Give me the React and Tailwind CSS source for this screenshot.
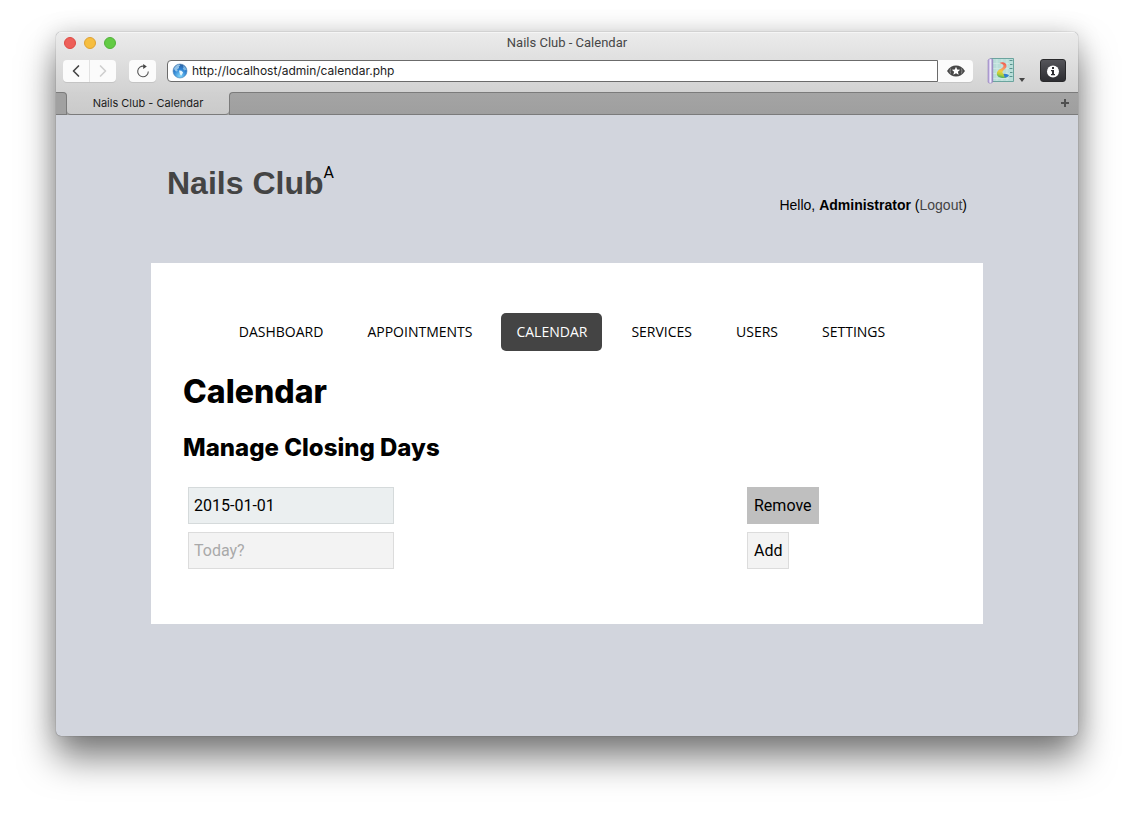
import { ChevronLeft, ChevronRight } from "lucide-react";

const navItems = ["Dashboard", "Appointments", "Calendar", "Services", "Users", "Settings"];

function ReloadIcon() {
  return (
    <svg viewBox="0 0 14 14" className="size-[14px]" fill="none" stroke="#555" strokeWidth="1.1" aria-hidden="true">
      <path d="M12.300 7.500a5.300 5.300 0 1 1-4.300-5.300" />
      <path d="M7.200 0l3.600 2.400-3.600 2.600z" fill="#454545" stroke="none" />
    </svg>
  );
}

function GlobeIcon() {
  return (
    <svg viewBox="0 0 16 16" className="size-4 shrink-0" aria-hidden="true">
      <defs>
        <radialGradient id="ocean" cx="0.5" cy="0.85" r="0.85">
          <stop offset="0" stopColor="#7fd6fa" />
          <stop offset="0.6" stopColor="#2c7fd0" />
          <stop offset="1" stopColor="#2b5f9e" />
        </radialGradient>
      </defs>
      <circle cx="8" cy="8" r="7" fill="url(#ocean)" stroke="#4d86b8" strokeWidth="0.6" />
      <path d="M2 5.500C3 3 5 1.600 7.300 1.400l1 1.200-1.500 1 .3 1.500-1.900 1.200.5 1.700-1.600.5L2.500 7z" fill="#a5d0ee" opacity="0.85" />
      <path d="M7 7.500l2.400.3 1.700 1.600-.8 1.500-1.200 1.900-1.200-1.700z" fill="#e9f7fd" />
      <path d="M11 2.200c1.800 1 3 2.800 3.300 4.600l-1.700.6-1.900-1.600.9-1.500z" fill="#8fc5ea" opacity="0.8" />
    </svg>
  );
}

function EyeStarIcon() {
  return (
    <svg viewBox="0 0 18 12" className="h-3 w-[18px]" aria-hidden="true">
      <path d="M0 6C2.500 2 5.500.5 9 .5S15.500 2 18 6c-2.500 4-5.500 5.500-9 5.500S2.500 10 0 6z" fill="#484848" />
      <path d="M9 1.800l1.200 2.800 3 .2-2.300 2 .8 3L9 8.200 6.300 9.800l.8-3-2.300-2 3-.2z" fill="#fff" />
      <path d="M3.600 3.500q-1.200 2.500 0 5M14.400 3.500q1.200 2.500 0 5" stroke="#aaa" strokeWidth="0.7" fill="none" />
    </svg>
  );
}

function ScrollIcon() {
  return (
    <svg viewBox="0 0 28 28" className="size-7" aria-hidden="true">
      <defs>
        <linearGradient id="flame" x1="0.6" y1="0" x2="0.4" y2="1">
          <stop offset="0" stopColor="#ef5a4c" />
          <stop offset="0.35" stopColor="#f7906a" />
          <stop offset="0.6" stopColor="#f1cf3c" />
          <stop offset="0.8" stopColor="#b4cf3c" />
          <stop offset="1" stopColor="#3faa62" />
        </linearGradient>
        <linearGradient id="roll">
          <stop offset="0" stopColor="#a48fce" />
          <stop offset="0.5" stopColor="#f4efff" />
          <stop offset="1" stopColor="#8f7cba" />
        </linearGradient>
      </defs>
      <path d="M3.500 1.500h23v23h-21z" fill="#b9ded9" stroke="#6ba49e" />
      <path d="M10 2v22M15 2v22M20 2v22M6 6.500h16M6 11.500h16M6 16.500h16M6 21.500h16" stroke="#d0eae6" strokeWidth="0.8" />
      <path d="M22.500 3.500h3M23 7.500h2.500M22.500 11.500h3M23 15.500h2.500M22.500 19.500h3" stroke="#4e8984" strokeWidth="0.9" />
      <path d="M12.500 6c3-1.700 7.200-.5 7 3.200-.2 2.800-3.800 3.800-4 6-.1 2 3.300 1.500 5.600 3.300-1.200 2.200-4.500 3-7 2.300-4.200-.9-5.300-4-3.300-6.800 1.700-2.200 5.800-3 5.700-5.300-.1-1.500-2.300-1.900-4-2.700z" fill="url(#flame)" />
      <path d="M16.500 17c1.500-.8 4.300 0 5.500 1.500-.8 1.200-2.500 2-4.200 2.200z" fill="#2f7fd0" />
      <path d="M1 3.500C1 1.500 5.800.8 5.800 3v21.500c0 2-4.800 2.400-4.800.3z" fill="url(#roll)" stroke="#9583bd" strokeWidth="0.6" />
    </svg>
  );
}

function InfoIcon() {
  return (
    <svg viewBox="0 0 14 14" className="size-[14px]" aria-hidden="true">
      <circle cx="7" cy="7.500" r="6" fill="#fff" />
      <path d="M6 3h2v2H6zM5 6h3v4h1v1.300H5V10h1V7.300H5z" fill="#2e2e32" />
    </svg>
  );
}

function Browser({ children }) {
  return (
    <div className="flex flex-1 flex-col overflow-hidden rounded-[5px] bg-[#d2d5dd] shadow-[0_0_1px_rgba(0,0,0,0.6),0_22px_36px_rgba(0,0,0,0.5),0_0_24px_rgba(0,0,0,0.15)]">
      <header className="flex h-[60px] shrink-0 flex-col border-t border-[#f5f5f5] bg-linear-to-b from-[#ebebeb] to-[#d2d2d2] font-[Inter,sans-serif]">
        <div className="relative flex h-5 items-center justify-center">
          <div className="absolute left-2 flex gap-2">
            <button aria-label="Close" className="size-3 rounded-full border border-[#de4943] bg-[#ed5f59]" />
            <button aria-label="Minimize" className="size-3 rounded-full border border-[#dea133] bg-[#f6be40]" />
            <button aria-label="Zoom" className="size-3 rounded-full border border-[#52b13a] bg-[#63cb44]" />
          </div>
          <p className="font-[Roboto,sans-serif] text-[13px] text-[#474747]">Nails Club - Calendar</p>
        </div>
        <div className="flex items-center pt-[6px] pr-3 pl-[7px]">
          <div className="flex h-[22px] overflow-hidden rounded-[4px] bg-[#fbfbfb] shadow-[0_1px_0_#c4c4c4]">
            <button aria-label="Back" className="flex w-[27px] items-center justify-center border-r border-[#e2e2e2] text-[#454545]">
              <ChevronLeft size={20} strokeWidth={2} />
            </button>
            <button aria-label="Forward" className="flex w-[26px] items-center justify-center text-[#cfcfcf]">
              <ChevronRight size={20} strokeWidth={2} />
            </button>
          </div>
          <button aria-label="Reload" className="ml-[13px] flex h-[22px] w-[27px] items-center justify-center rounded-[4px] bg-[#fbfbfb] shadow-[0_1px_0_#c4c4c4]">
            <ReloadIcon />
          </button>
          <label className="ml-[11px] flex h-[22px] flex-1 items-center gap-1 rounded-l-[4px] border border-[#6b6b6b] bg-white pl-1">
            <GlobeIcon />
            <input aria-label="Address" defaultValue="http://localhost/admin/calendar.php" className="min-w-0 flex-1 bg-transparent text-xs leading-5 text-[#1c1c1c] outline-none" />
          </label>
          <button aria-label="Reader" className="flex h-[22px] w-[35px] items-center justify-center rounded-r-[4px] bg-[#fbfbfb] shadow-[0_1px_0_#c4c4c4]">
            <EyeStarIcon />
          </button>
          <button aria-label="Styles" className="ml-[14px] flex h-[22px] items-center gap-1">
            <ScrollIcon />
            <svg viewBox="0 0 6 4" className="mt-[18px] h-1 w-[6px]" aria-hidden="true">
              <path d="M0 0h6L3 4z" fill="#454545" />
            </svg>
          </button>
          <button aria-label="Page info" className="ml-[15px] flex h-[23px] w-[26px] items-center justify-center rounded-[3px] border border-[#29292b] bg-linear-to-b from-[#55555a] to-[#2e2e32]">
            <InfoIcon />
          </button>
        </div>
      </header>
      <div className="flex h-[23px] shrink-0 font-[Inter,sans-serif]">
        <div className="flex w-[11px] bg-[#d0d0d0]">
          <div className="flex-1 rounded-tr-[4px] border-t border-r border-[#7b7b7b] border-b bg-[#a1a1a1]" />
        </div>
        <div className="flex w-[162px] bg-[#a1a1a1]">
          <a href="#calendar" className="flex-1 rounded-b-[4px] border-b border-[#7b7b7b] bg-linear-to-b from-[#d1d1d1] to-[#cacaca] text-center text-[11px] leading-[22px] text-[#1c1c1c]">
            Nails Club - Calendar
          </a>
        </div>
        <div className="flex flex-1 bg-[#d0d0d0]">
          <div className="flex flex-1 items-center justify-end rounded-tl-[4px] border-y border-l border-[#7b7b7b] bg-linear-to-b from-[#a4a4a4] to-[#9f9f9f] pr-[9px]">
            <button aria-label="New tab">
              <svg viewBox="0 0 8 8" className="mb-[2px] size-2" aria-hidden="true">
                <path d="M4 0v8M0 4h8" stroke="#505050" strokeWidth="2" />
              </svg>
            </button>
          </div>
        </div>
      </div>
      {children}
    </div>
  );
}

export default function App() {
  return (
    <div className="flex min-h-screen flex-col bg-white px-14 pt-8 pb-20">
      <Browser>
        <div className="mx-auto w-full max-w-[832px] py-10">
          <div className="flex h-[108px] items-start justify-between px-4 font-['Liberation_Sans',sans-serif]">
            <div className="flex items-start pt-1 text-black">
              <h1 className="text-[32px] leading-[48px] font-bold text-[#444]">
                <a href="#home">Nails Club</a>
              </h1>
              <sup className="top-0 pt-1 font-[Roboto,sans-serif] text-base leading-5">A</sup>
            </div>
            <p className="pt-10 text-sm leading-5 text-black">
              Hello, <b>Administrator</b> (<a href="#logout" className="text-[#444]">Logout</a>)
            </p>
          </div>
          <main className="bg-white px-8 pt-[50px] pb-[55px] text-black">
            <nav className="flex justify-center gap-[14px] pr-[10px] font-['Open_Sans',sans-serif]">
              {navItems.map((item) => (
                <a
                  key={item}
                  href={`#${item.toLowerCase()}`}
                  className={
                    item === "Calendar"
                      ? "rounded-[5px] bg-[#444] px-[15px] text-sm leading-[38px] font-medium text-white uppercase"
                      : "px-[15px] text-sm leading-[38px] uppercase"
                  }
                >
                  {item}
                </a>
              ))}
            </nav>
            <h1 className="mt-[21px] font-[Inter,sans-serif] text-[32px] leading-10 font-extrabold">Calendar</h1>
            <h2 className="mt-5 font-[Inter,sans-serif] text-2xl leading-8 font-extrabold">Manage Closing Days</h2>
            <form className="mt-[23px] grid grid-cols-[559fr_199fr] gap-y-2 px-[5px] font-[Roboto,sans-serif] text-base" onSubmit={(e) => e.preventDefault()}>
              <div>
                <input aria-label="Closing day" defaultValue="2015-01-01" className="h-[37px] w-[206px] border border-[#d5dadb] bg-[#ebeff0] px-[5px]" />
              </div>
              <div>
                <button className="h-[37px] border border-[#bfbfbf] bg-[#bfbfbf] px-[6px]">Remove</button>
              </div>
              <div>
                <input aria-label="New closing day" placeholder="Today?" className="h-[37px] w-[206px] border border-[#dcdcdc] bg-[#f3f3f3] px-[5px] placeholder:text-[#a9a9a9]" />
              </div>
              <div>
                <button className="h-[37px] border border-[#dcdcdc] bg-[#f3f3f3] px-[6px]">Add</button>
              </div>
            </form>
          </main>
        </div>
      </Browser>
    </div>
  );
}
